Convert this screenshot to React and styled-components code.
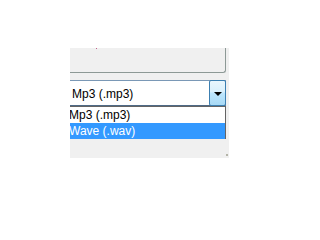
import React from "react";
import styled, { createGlobalStyle } from "styled-components";

const Global = createGlobalStyle`
  html, body { margin: 0; padding: 0; background: #ffffff; }
  body { font-family: "Liberation Sans", Arial, sans-serif; }
`;

const Page = styled.div`
  width: 300px;
  height: 206px;
  padding: 48px 0 0 70px;
  box-sizing: border-box;
`;

const Window = styled.div`
  position: relative;
  width: 159px;
  height: 110px;
  background: #f0f0f0;
  overflow: hidden;
  padding-right: 3px;
  box-sizing: border-box;
  display: flex;
  flex-direction: column;
`;

const GroupPanel = styled.div`
  height: 25px;
  margin-left: -30px;
  border-right: 1px solid #8d9996;
  border-bottom: 1px solid #8d9996;
  border-bottom-right-radius: 3px;
  box-sizing: border-box;
  flex-shrink: 0;
`;

const Combo = styled.div`
  position: relative;
  margin-top: 7px;
  margin-left: -30px;
  height: 26px;
  border: 1px solid #7a98b6;
  border-left-color: #7a98b6;
  border-bottom-color: #4f6a86;
  background: #ffffff;
  box-sizing: border-box;
  display: flex;
  align-items: center;
  flex-shrink: 0;
`;

const ComboText = styled.span`
  flex: 1;
  padding-left: 31px;
  font-size: 12px;
  color: #000000;
  line-height: 14px;
  margin-top: 1px;
`;

const DropButton = styled.div`
  width: 17px;
  height: 26px;
  margin: -1px -1px -1px 0;
  box-sizing: border-box;
  border: 1px solid #3c7fb1;
  border-radius: 2px;
  background: linear-gradient(
    to bottom,
    #eaf6fd 0%,
    #d9f0fc 45%,
    #bee6fd 50%,
    #a7d9f5 100%
  );
  display: flex;
  align-items: center;
  justify-content: center;
`;

const Arrow = styled.span`
  width: 0;
  height: 0;
  border-left: 4px solid transparent;
  border-right: 4px solid transparent;
  border-top: 4px solid #000000;
  margin-top: 1px;
`;

const DropList = styled.ul`
  position: absolute;
  left: -30px;
  top: 58px;
  width: 186px;
  margin: 0;
  padding: 0;
  list-style: none;
  background: #ffffff;
  border-top: 1px solid #646464;
  border-right: 1px solid #646464;
  box-sizing: border-box;
`;

const Item = styled.li`
  height: 16px;
  padding-left: 29px;
  font-size: 12px;
  line-height: 16px;
  color: ${(p) => (p.$selected ? "#ffffff" : "#000000")};
  background: ${(p) => (p.$selected ? "#3399ff" : "transparent")};
`;

const Grip = styled.span`
  position: absolute;
  right: 1px;
  bottom: 2px;
  width: 2px;
  height: 2px;
  background: #b4b4a8;
`;

const Dot = styled.span`
  position: absolute;
  left: 26px;
  top: 0;
  width: 1px;
  height: 1px;
  background: #c0608a;
`;

export default function App() {
  return (
    <>
      <Global />
      <Page>
        <Window>
          <Dot />
          <GroupPanel />
          <Combo>
            <ComboText>Mp3 (.mp3)</ComboText>
            <DropButton>
              <Arrow />
            </DropButton>
          </Combo>
          <DropList>
            <Item>Mp3 (.mp3)</Item>
            <Item $selected>Wave (.wav)</Item>
          </DropList>
          <Grip />
        </Window>
      </Page>
    </>
  );
}
